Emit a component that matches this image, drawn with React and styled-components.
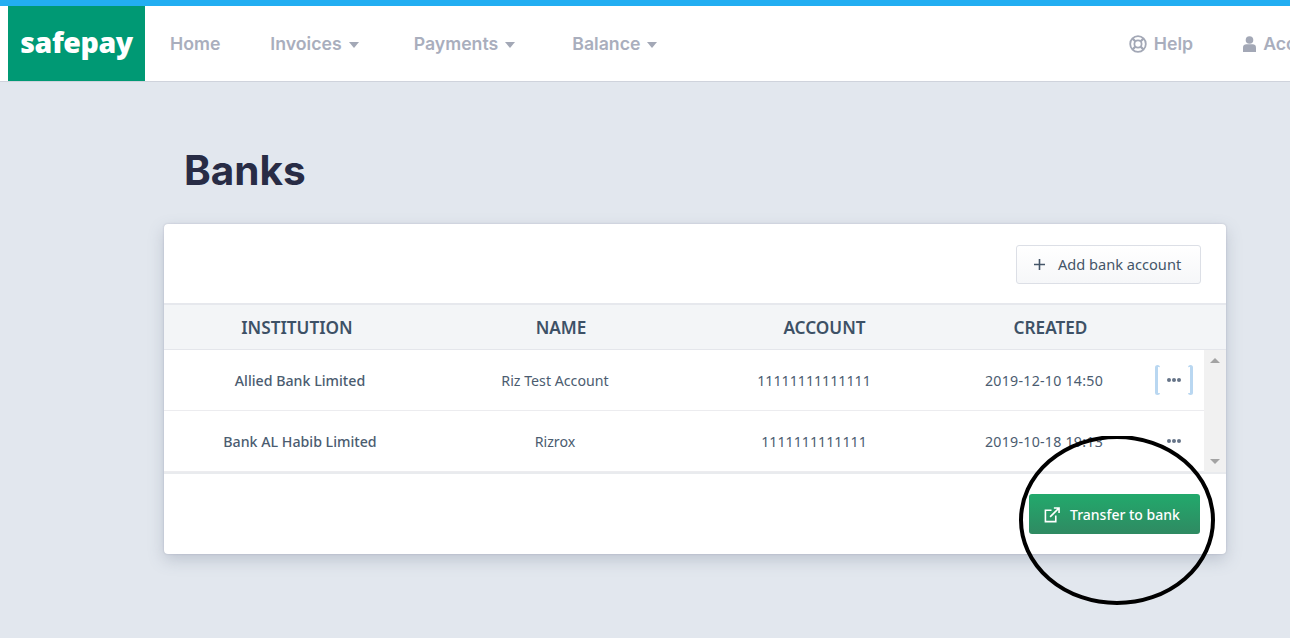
import React from 'react';
import styled, { createGlobalStyle } from 'styled-components';

const Global = createGlobalStyle`
  html, body { margin: 0; padding: 0; }
  body { background: #e2e7ee; font-family: "Noto Sans", "Open Sans", sans-serif; overflow: hidden; }
`;
const Page = styled.div`
  position: relative; width: 1290px; height: 638px; overflow: hidden;
  border-top: 6px solid #22aef2; box-sizing: border-box;
`;
const Nav = styled.nav`
  height: 76px; box-sizing: border-box; background: #fff; border-bottom: 1px solid #cfd3dc;
  display: flex; align-items: stretch; padding-left: 8px; white-space: nowrap; width: 1290px;
`;
const Logo = styled.div`
  width: 137px; background: #009974; color: #fff; display: flex; align-items: center; justify-content: center;
  font: 800 28.5px/1 "Open Sans", sans-serif; letter-spacing: -0.4px; padding-bottom: 2px; box-sizing: border-box;
`;
const NavItem = styled.a`
  display: flex; align-items: center; font: 600 17.7px/1 Inter, sans-serif; color: #a9aebd; flex: none;
  margin-left: ${p => p.$ml}px; margin-right: ${p => p.$mr || 0}px;
`;
const Caret = styled.span`
  width: 0; height: 0; margin-left: 7px; margin-top: 3px;
  border-left: 5.5px solid transparent; border-right: 5.5px solid transparent; border-top: 6px solid #a3a8b6;
`;
const Spacer = styled.div`flex: 1;`;
const NavIcon = styled.svg`margin-right: 7px; flex: none;`;
const Main = styled.main`padding: 0 64px 0 164px;`;
const Title = styled.h1`
  margin: 0; padding: 63px 0 0 20px; height: 142px; box-sizing: border-box;
  font: 700 40.5px/52px Inter, sans-serif; color: #282c45;
`;
const Card = styled.section`
  height: 330px; background: #fff; border-radius: 4px;
  box-shadow: 0 6px 16px rgba(90,100,125,.26), 0 0 2px rgba(90,100,125,.3);
  display: flex; flex-direction: column;
`;
const TopBar = styled.div`
  height: 81px; box-sizing: border-box; border-bottom: 2px solid #e6e8ed;
  display: flex; justify-content: flex-end; padding: 21px 25px 0 0;
`;
const AddButton = styled.button`
  width: 185px; height: 39px; box-sizing: border-box; border: 1px solid #dcdfe6; border-radius: 3px;
  background: linear-gradient(#fff, #f6f7f9); color: #445568; font: 14.6px/1 "Noto Sans", sans-serif;
  display: flex; align-items: center; gap: 12px; padding: 0 0 0 16px;
`;
const HeadRow = styled.div`
  display: grid; grid-template-columns: 266px 262px 265px 187px 1fr;
  height: 45px; background: #f3f5f7; border-bottom: 1px solid #e4e6eb; box-sizing: border-box;
  align-items: center; color: #3d5166; font: 600 17.2px/1 "Noto Sans", sans-serif; padding-top: 1px;
`;
const HeadCell = styled.div`text-align: center;`;
const ScrollArea = styled.div`
  height: 124px; display: flex; border-bottom: 2px solid #e9ebee; box-sizing: border-box;
`;
const Rows = styled.div`flex: 1; min-width: 0;`;
const Row = styled.div`
  display: grid; grid-template-columns: 272px 238px 280px 180px 70px; height: 61px;
  box-sizing: border-box; align-items: center; border-bottom: 1px solid #ececef;
  color: #4b5c70; font: 14.2px/1 "Noto Sans", sans-serif;
`;
const Cell = styled.div`
  text-align: center; white-space: nowrap; padding-top: 2px;
  font-weight: ${p => p.$strong ? 500 : 400};
  letter-spacing: ${p => p.$wide ? '0.25px' : '0'};
`;
const Actions = styled.div`
  position: relative; width: 38px; height: 30px; margin-left: 21px;
  display: flex; align-items: center; justify-content: center; gap: 1.4px;
  ${p => p.$focus && `
    &::before, &::after {
      content: ''; position: absolute; top: 0; bottom: 0; width: 5px; box-sizing: border-box;
      border: 2px solid #b9d7f1; border-radius: 3px;
    }
    &::before { left: 0; border-right: 0; border-left-width: 3px; }
    &::after { right: 0; border-left: 0; border-right-width: 3px; }
  `}
`;
const Dot = styled.i`width: 4px; height: 4px; border-radius: 50%; background: #667488;`;
const Scrollbar = styled.div`
  width: 22px; background: #f1f1f1; display: flex; flex-direction: column; justify-content: space-between; align-items: center;
  padding: 8px 0 8px 0; box-sizing: border-box; height: 122px;
`;
const Arrow = styled.span`
  width: 0; height: 0; border-left: 5px solid transparent; border-right: 5px solid transparent;
  ${p => p.$up ? 'border-bottom: 5px solid #a3a3a3;' : 'border-top: 5px solid #a3a3a3;'}
`;
const Footer = styled.div`flex: 1; display: flex; justify-content: flex-end; padding: 20px 26px 0 0;`;
const Transfer = styled.button`
  width: 171px; height: 40px; border: 0; border-radius: 3px; background: linear-gradient(#22a96c, #2f8a62);
  color: #fff; font: 500 14px/1 "Noto Sans", sans-serif; display: flex; align-items: center; gap: 10px; padding: 1px 0 0 15px; box-sizing: border-box;
`;
const Annotation = styled.svg`position: absolute; left: 1015px; top: 430px;`;

const rows = [
  ['Allied Bank Limited', 'Riz Test Account', '11111111111111', '2019-12-10 14:50', true],
  ['Bank AL Habib Limited', 'Rizrox', '1111111111111', '2019-10-18 19:13', false],
];

export default function App() {
  return (
    <Page>
      <Global />
      <Nav>
        <Logo>safepay</Logo>
        <NavItem $ml={25}>Home</NavItem>
        <NavItem $ml={50}>Invoices<Caret /></NavItem>
        <NavItem $ml={55}>Payments<Caret /></NavItem>
        <NavItem $ml={57}>Balance<Caret /></NavItem>
        <Spacer />
        <NavItem $ml={0}>
          <NavIcon width="18" height="18" viewBox="0 0 18 18" fill="none" stroke="#a3a8b6">
            <circle cx="9" cy="9" r="7.8" strokeWidth="1.8" />
            <circle cx="9" cy="9" r="3.6" strokeWidth="1.8" />
            <path d="M3.5 3.5l3 3M14.5 3.5l-3 3M3.5 14.5l3-3M14.5 14.5l-3-3" strokeWidth="2.4" />
          </NavIcon>
          Help
        </NavItem>
        <NavItem $ml={50} $mr={-45}>
          <NavIcon width="13" height="16" viewBox="0 0 13 16" fill="#a3a8b6">
            <circle cx="6.5" cy="4" r="3.8" />
            <path d="M0 16v-4.5C0 9.5 1.5 8.3 3.4 8.3h6.2c1.9 0 3.4 1.2 3.4 3.2V16z" />
          </NavIcon>
          Account
        </NavItem>
      </Nav>
      <Main>
        <Title>Banks</Title>
        <Card>
          <TopBar>
            <AddButton>
              <svg width="13" height="13" viewBox="0 0 13 13" stroke="#445568" strokeWidth="1.6"><path d="M6.5 1v11M1 6.5h11" /></svg>
              Add bank account
            </AddButton>
          </TopBar>
          <HeadRow>
            <HeadCell>INSTITUTION</HeadCell>
            <HeadCell>NAME</HeadCell>
            <HeadCell>ACCOUNT</HeadCell>
            <HeadCell>CREATED</HeadCell>
            <div />
          </HeadRow>
          <ScrollArea>
            <Rows>
              {rows.map(r => (
                <Row key={r[0]}>
                  <Cell $strong>{r[0]}</Cell>
                  <Cell>{r[1]}</Cell>
                  <Cell>{r[2]}</Cell>
                  <Cell $wide>{r[3]}</Cell>
                  <Actions $focus={r[4]}><Dot /><Dot /><Dot /></Actions>
                </Row>
              ))}
            </Rows>
            <Scrollbar><Arrow $up /><Arrow /></Scrollbar>
          </ScrollArea>
          <Footer>
            <Transfer>
              <svg width="16" height="16" viewBox="0 0 17 17" fill="none" stroke="#fff" strokeWidth="1.7">
                <path d="M8 3.5H1.5v12h11V9" />
                <path d="M6.5 10.5L15.5 1.5M10.5 1h5.5v5.5" />
              </svg>
              Transfer to bank
            </Transfer>
          </Footer>
        </Card>
      </Main>
      <Annotation width="205" height="178" viewBox="0 0 205 178" fill="none">
        <ellipse cx="102" cy="84" rx="96" ry="83" stroke="#000" strokeWidth="4" />
      </Annotation>
    </Page>
  );
}
